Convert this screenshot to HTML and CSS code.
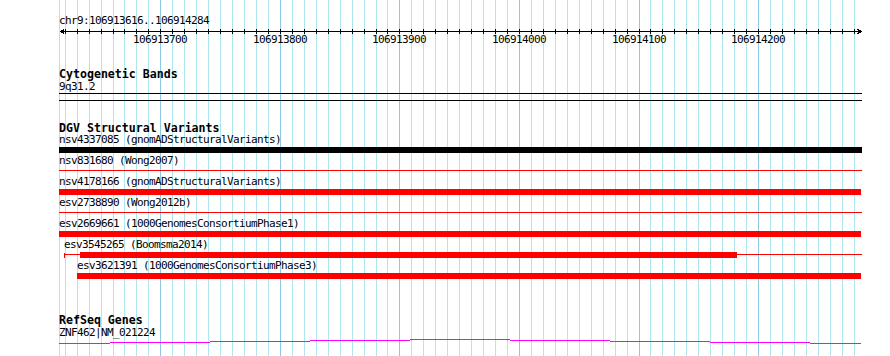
FILE: index.html
```html
<!DOCTYPE html>
<html lang="en">

<head>
    <meta charset="utf-8">
    <meta name="viewport" content="width=device-width, initial-scale=1.0">
    <title>chr9:106913616..106914284</title>
    <link rel="stylesheet" href="styles.css">
</head>

<body>
    <div class="view">
        <div class="gridlines"></div>

        <section class="ruler">
            <div class="locus">chr9:106913616..106914284</div>
            <div class="scale">
                <div class="scale-line"></div>
                <svg class="arrow arrow-left" width="6" height="5" shape-rendering="crispEdges">
                    <polyline points="4.5,0.5 0.5,2.5 4.5,4.5" fill="none" stroke="#000" />
                </svg>
                <svg class="arrow arrow-right" width="6" height="5" shape-rendering="crispEdges">
                    <polyline points="1.5,0.5 5.5,2.5 1.5,4.5" fill="none" stroke="#000" />
                </svg>
            </div>
            <div class="scale-labels"></div>
        </section>

        <section class="track cyto">
            <h2>Cytogenetic Bands</h2>
            <div class="label">9q31.2</div>
            <div class="band"></div>
        </section>

        <section class="track dgv">
            <h2>DGV Structural Variants</h2>
            <div class="row">
                <div class="label">nsv4337085 (gnomADStructuralVariants)</div>
                <div class="feat"><div class="bar black" style="left:0;width:803px"></div></div>
            </div>
            <div class="row">
                <div class="label">nsv831680 (Wong2007)</div>
                <div class="feat"><div class="line" style="left:0;width:803px"></div></div>
            </div>
            <div class="row">
                <div class="label">nsv4178166 (gnomADStructuralVariants)</div>
                <div class="feat"><div class="bar" style="left:0;width:802px"></div></div>
            </div>
            <div class="row">
                <div class="label">esv2738890 (Wong2012b)</div>
                <div class="feat"><div class="line" style="left:0;width:803px"></div></div>
            </div>
            <div class="row">
                <div class="label">esv2669661 (1000GenomesConsortiumPhase1)</div>
                <div class="feat"><div class="bar" style="left:0;width:802px"></div></div>
            </div>
            <div class="row">
                <div class="label" style="margin-left:5px">esv3545265 (Boomsma2014)</div>
                <div class="feat">
                    <div class="whisker" style="left:5px"></div>
                    <div class="line" style="left:5px;width:16px"></div>
                    <div class="bar" style="left:21px;width:657px"></div>
                    <div class="line" style="left:678px;width:125px"></div>
                </div>
            </div>
            <div class="row">
                <div class="label" style="margin-left:18px">esv3621391 (1000GenomesConsortiumPhase3)</div>
                <div class="feat"><div class="bar" style="left:18px;width:784px"></div></div>
            </div>
        </section>

        <section class="track refseq">
            <h2>RefSeq Genes</h2>
            <div class="label">ZNF462|NM_021224</div>
            <svg class="transcript" width="803" height="5" shape-rendering="crispEdges">
                <g fill="#ff00ff">
                    <rect x="0" y="4" width="51" height="1" />
                    <rect x="51" y="3" width="100" height="1" />
                    <rect x="151" y="2" width="100" height="1" />
                    <rect x="251" y="1" width="100" height="1" />
                    <rect x="351" y="0" width="100" height="1" />
                    <rect x="451" y="1" width="100" height="1" />
                    <rect x="551" y="2" width="100" height="1" />
                    <rect x="651" y="3" width="100" height="1" />
                    <rect x="751" y="4" width="51" height="1" />
                </g>
            </svg>
        </section>
    </div>

    <script>
        const start = 106913616;
        const bpWidth = 1.1955;
        const grid = document.querySelector(".gridlines");
        const scale = document.querySelector(".scale");
        const labels = document.querySelector(".scale-labels");

        function toPx(bp) {
            return Math.floor(1.4 + (bp - start) * bpWidth);
        }

        function addGridline(x, major) {
            const line = document.createElement("div");
            line.className = major ? "gridline major" : "gridline";
            line.style.left = x + "px";
            grid.appendChild(line);
        }

        addGridline(0, false);

        for (let bp = 106913620; bp <= 106914280; bp += 10) {
            const x = toPx(bp);
            const major = bp % 100 == 0;
            addGridline(x, major);

            const tick = document.createElement("div");
            tick.className = "tick";
            tick.style.left = x + "px";
            scale.appendChild(tick);

            if (major) {
                const label = document.createElement("div");
                label.className = "scale-label";
                label.textContent = bp;
                label.style.left = (x - 27) + "px";
                labels.appendChild(label);
            }
        }
    </script>
</body>

</html>
```

FILE: styles.css
```css
body {
    margin: 0;
    background-color: #ffffff;
    color: #000000;
    font-family: "DejaVu Sans Mono", monospace;
    font-size: 11px;
    line-height: 12px;
    letter-spacing: -0.62px;
}

.view {
    position: relative;
    margin-left: 59px;
    width: 803px;
    height: 356px;
    overflow: hidden;
}

.gridlines {
    position: absolute;
    top: 0;
    left: 0;
    width: 100%;
    height: 100%;
}

.gridline {
    position: absolute;
    top: 0;
    bottom: 0;
    width: 1px;
    background-color: #ade6ec;
}

.gridline.major {
    background-color: #8ccbe6;
}

.ruler,
.track {
    position: relative;
}

.ruler {
    padding-top: 15px;
}

.locus {
    height: 12px;
}

.scale {
    position: relative;
    height: 5px;
    margin-top: 2px;
}

.scale-line {
    position: absolute;
    top: 2px;
    left: 1px;
    width: 801px;
    height: 1px;
    background-color: #000000;
}

.arrow {
    position: absolute;
    top: 0;
}

.arrow-left {
    left: 1px;
}

.arrow-right {
    left: 797px;
}

.tick {
    position: absolute;
    top: 0;
    width: 1px;
    height: 5px;
    background-color: #000000;
}

.scale-labels {
    position: relative;
    height: 12px;
}

.scale-label {
    position: absolute;
    top: 0;
    width: 54px;
    text-align: center;
}

h2 {
    margin: 0;
    font-size: 11.6px;
    font-weight: bold;
    line-height: 12px;
    letter-spacing: 0;
}

.label {
    height: 12px;
    white-space: nowrap;
}

.cyto {
    margin-top: 22px;
}

.cyto .label,
.refseq .label {
    margin-top: 1px;
}

.band {
    height: 6px;
    border-top: 1px solid #000000;
    border-bottom: 1px solid #000000;
}

.dgv {
    margin-top: 21px;
}

.feat {
    position: relative;
    height: 6px;
    margin: 1px 0 2px;
}

.bar {
    position: absolute;
    top: 0;
    height: 6px;
    background-color: #ff0000;
}

.bar.black {
    background-color: #000000;
}

.line {
    position: absolute;
    top: 2px;
    height: 1px;
    background-color: #ff0000;
}

.whisker {
    position: absolute;
    top: 1px;
    width: 1px;
    height: 5px;
    background-color: #ff0000;
}

.refseq {
    margin-top: 35px;
}

.transcript {
    display: block;
}
```
